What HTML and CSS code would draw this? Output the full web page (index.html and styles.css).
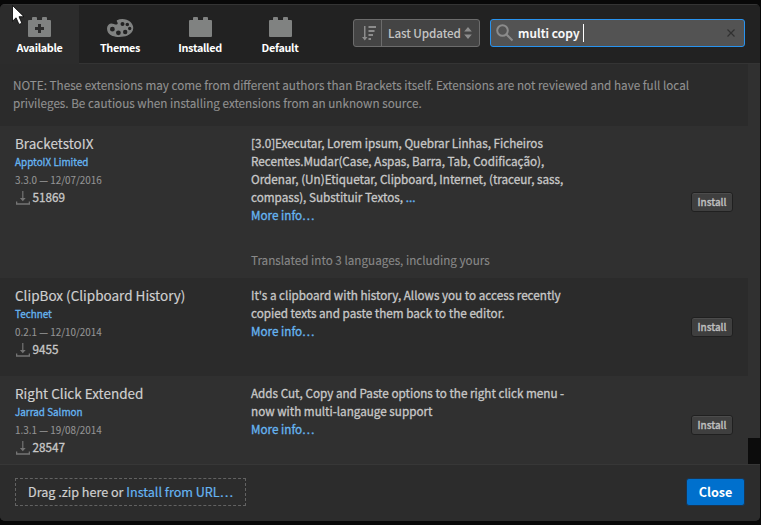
FILE: index.html
```
<!DOCTYPE html>
<html lang="en">
<head>
<meta charset="utf-8">
<title>Extension Manager</title>
<link rel="stylesheet" href="styles.css">
</head>
<body>
<svg class="defs" width="0" height="0">
  <symbol id="brick" viewBox="0 0 23 20"><path d="M4 3V1q0-1 1-1h3q1 0 1 1v2h5V1q0-1 1-1h3q1 0 1 1v2h3q1 0 1 1v15q0 1-1 1H1q-1 0-1-1V4q0-1 1-1z"/></symbol>
  <symbol id="download" viewBox="0 0 14 14"><path d="M6.200 0h1.200v7h2.300L6.800 10.200 3.900 7h2.300zM0 10.500h1.300v1.700h11.400v-1.700H14v3.300H0z"/></symbol>
</svg>
<div class="modal">
  <header class="header">
    <nav class="tabs">
      <a class="tab active"><svg class="brick" viewBox="0 0 23 20"><use href="#brick"/><path class="plus" d="M10 7h3v3h3v3h-3v3h-3v-3H7v-3h3z"/></svg><span>Available</span></a>
      <a class="tab"><svg class="palette" viewBox="0 0 27 18"><path fill-rule="evenodd" d="M10 1.200C14-.8 20-.2 23.500 3 28 7.500 27 14 20.500 16.500 14 19 4 18.500 1 13.500-1.200 9 .5 5 4 4.500c2.500-.2 5 2 6.500.5 1-1.200-1.500-2.500-.5-3.800zM13.500 5a2 2 0 1 0 4 0 2 2 0 1 0-4 0zM18.500 5.500a1.800 1.800 0 1 0 3.600 0 1.800 1.800 0 1 0-3.600 0zM21 9.500a1.700 1.700 0 1 0 3.400 0 1.700 1.700 0 1 0-3.400 0zM16 13a2.200 2.200 0 1 0 4.400 0 2.200 2.200 0 1 0-4.400 0zM9 13.800a2.400 2.400 0 1 0 4.800 0 2.400 2.400 0 1 0-4.800 0zM3 10.200a2.400 2.400 0 1 0 4.800 0 2.400 2.400 0 1 0-4.800 0z"/></svg><span>Themes</span></a>
      <a class="tab"><svg class="brick" viewBox="0 0 23 20"><use href="#brick"/></svg><span>Installed</span></a>
      <a class="tab"><svg class="brick" viewBox="0 0 23 20"><use href="#brick"/></svg><span>Default</span></a>
    </nav>
    <div class="sort">
      <span class="sort-dir"><svg width="15" height="15" viewBox="0 0 15 15"><path d="M2 0h1.500v11H5.500L2.800 14.500 0 11h2zM6.500 0h7.500v2H6.500zM6.500 4h6v2h-6zM6.500 8h4.500v2H6.500zM6.500 12h2.500v2H6.500z"/></svg></span>
      <span class="sort-label">Last Updated</span>
      <svg class="arrows" width="8" height="12" viewBox="0 0 8 12"><path d="M4 0l3.800 4.500H.2zM.2 7.500h7.600L4 12z"/></svg>
    </div>
    <div class="search">
      <svg width="18" height="18" viewBox="0 0 18 18"><circle cx="6.500" cy="6.500" r="5.300"/><path d="M10.500 10.500l6 6"/></svg>
      <span class="query">multi copy</span><i class="caret"></i>
      <svg class="clear" width="8" height="8" viewBox="0 0 8 8"><path d="M.5.5l7 7M7.500.5l-7 7"/></svg>
    </div>
  </header>
  <main class="body">
    <div class="list">
      <p class="note">NOTE: These extensions may come from different authors than Brackets itself. Extensions are not reviewed and have full local<br>privileges. Be cautious when installing extensions from an unknown source.</p>
      <section class="row tall">
        <div class="info"><h2>BracketstoIX</h2><a class="author">ApptoIX Limited</a><div class="version">3.3.0 — 12/07/2016</div><div class="downloads"><svg><use href="#download"/></svg><span>51869</span></div></div>
        <div class="desc">[3.0]Executar, Lorem ipsum, Quebrar Linhas, Ficheiros<br>Recentes.Mudar(Case, Aspas, Barra, Tab, Codificação),<br>Ordenar, (Un)Etiquetar, Clipboard, Internet, (traceur, sass,<br>compass), Substituir Textos, <a>...</a><br><a>More info…</a><p class="translated">Translated into 3 languages, including yours</p></div>
        <div class="action"><button>Install</button></div>
      </section>
      <section class="row dark">
        <div class="info"><h2>ClipBox (Clipboard History)</h2><a class="author">Technet</a><div class="version">0.2.1 — 12/10/2014</div><div class="downloads"><svg><use href="#download"/></svg><span>9455</span></div></div>
        <div class="desc">It's a clipboard with history, Allows you to access recently<br>copied texts and paste them back to the editor.<br><a>More info…</a></div>
        <div class="action"><button>Install</button></div>
      </section>
      <section class="row">
        <div class="info"><h2>Right Click Extended</h2><a class="author">Jarrad Salmon</a><div class="version">1.3.1 — 19/08/2014</div><div class="downloads"><svg><use href="#download"/></svg><span>28547</span></div></div>
        <div class="desc">Adds Cut, Copy and Paste options to the right click menu -<br>now with multi-langauge support<br><a>More info…</a></div>
        <div class="action"><button>Install</button></div>
      </section>
    </div>
    <div class="scrollbar"><div class="thumb"></div></div>
  </main>
  <footer class="footer">
    <div class="drop">Drag .zip here or <a>Install from URL…</a></div>
    <button class="close">Close</button>
  </footer>
</div>
<svg class="pointer" width="13" height="20" viewBox="0 0 13 20"><path d="M.5.5v15.700l3.600-3.400 2.900 6.600 2.900-1.200-2.900-6.500h5z"/></svg>
</body>
</html>
```

FILE: styles.css
```
* { box-sizing: border-box; }
body {
  margin: 0; padding-top: 4px; height: 525px; overflow: hidden;
  background: #080808; color: #c8c8c8;
  font: 400 11.7px/18px "Noto Sans CJK SC", "Noto Sans", sans-serif;
  white-space: nowrap;
}
a { color: #66b5f2; }
.defs { display: block; height: 0; }
.modal {
  width: 760px; height: 517px; display: flex; flex-direction: column;
  border-radius: 5px; overflow: hidden; background: #2c2c2c;
}
.header {
  height: 60px; display: flex; align-items: flex-start; background: #222;
  border-top: 1px solid #343434; border-bottom: 1px solid #343434; flex: none;
}
.tabs { display: flex; width: 353px; }
.tab {
  width: 80px; height: 59px; padding-top: 12px; color: #fff; font-weight: 700; font-size: 10.8px;
  letter-spacing: -.3px;
  display: flex; flex-direction: column; align-items: center;
}
.tab.active { background: #2c2c2c; width: 79px; margin-right: 1px; height: 60px; }
.tab svg { fill: #808281; flex: none; height: 20px; width: 23px; margin-bottom: 1px; }
.tab .palette { width: 27px; height: 18px; margin: 2px 0 1px; }
.tab .plus { fill: #2c2c2c; }
.sort {
  width: 127px; height: 28px; margin-top: 14px; display: flex; align-items: center;
  background: #444; border: 1px solid #6c6c6c; border-radius: 3px; color: #c4c4c4;
}
.sort svg { fill: #8c8c8c; display: block; }
.sort-dir { width: 28px; height: 26px; padding: 6px 0 0 8px; border-right: 1px solid #6c6c6c; }
.sort-label { margin-left: 6px; width: 73px; font-weight: 500; letter-spacing: -.1px; }
.sort .arrows { margin-left: 3px; }
.search {
  width: 255px; height: 28px; margin: 14px 0 0 10px; padding: 0 9px 0 5px;
  display: flex; align-items: center; background: #535353; color: #fff;
  border: 1px solid #2893ef; border-radius: 3px;
}
.search svg { fill: none; stroke: #8b8b8b; stroke-width: 2; }
.query { margin-left: 4px; width: 64px; font-size: 12px; font-weight: 500; letter-spacing: .1px; -webkit-text-stroke: .2px; }
.caret { width: 1px; height: 18px; background: #fff; margin-left: 1px; }
.search .clear { stroke: #303030; stroke-width: 1.2; margin-left: auto; }
.body { height: 400px; display: flex; overflow: hidden; background: #303030; flex: none; }
.list { width: 748px; }
.note { margin: 0; height: 62px; padding: 12px 13px; background: #2b2b2b; color: #929292; -webkit-text-stroke: .1px; }
.row { height: 98px; display: flex; padding: 8px 15px 0; background: #303030; -webkit-text-stroke: .3px; }
.row.tall { height: 152px; }
.row.dark { background: #2b2b2b; }
.info { width: 236px; }
h2 { margin: 0 0 1px; font-size: 13.5px; line-height: 18px; font-weight: 400; color: #d0d0d0; -webkit-text-stroke: .15px; }
.author { display: block; font-size: 9.9px; }
.version { font-size: 9.9px; color: #949494; -webkit-text-stroke: .1px; }
.downloads { display: flex; align-items: center; height: 18px; margin-top: -1px; }
.downloads svg { width: 14px; height: 14px; fill: #747474; margin: 1px 2.500px 0 1px; -webkit-text-stroke: 0; }
.desc { width: 440px; }
.translated { margin: 27px 0 0; color: #898989; -webkit-text-stroke: .1px; }
.action { padding-top: 31px; }
.tall .action { padding-top: 58px; }
button {
  display: block; font: 500 9.9px/17px "Noto Sans CJK SC", "Noto Sans", sans-serif; padding: 0;
  width: 42px; height: 20px; border: 1px solid #202020; border-radius: 3px;
  background: #3f3f3f; color: #bebebe; box-shadow: inset 0 1px #4c4c4c;
}
.scrollbar { width: 12px; padding-top: 374px; }
.thumb { height: 26px; background: #0c0c0c; }
.footer {
  height: 57px; padding: 13px 15px 0; border-top: 1px solid #373737; background: #2c2c2c;
  display: flex; justify-content: space-between;
}
.drop { width: 231px; height: 28px; padding: 0 12px; line-height: 26px; font-size: 12.6px; border: 1px dashed #626262; color: #d0d0d0; -webkit-text-stroke: .2px; }
.close {
  width: 59px; height: 28px; font-size: 12.6px; line-height: 26px; font-weight: 700;
  color: #fff; background: #0070cd; border-color: #1b3550; box-shadow: none;
}
.pointer { position: absolute; left: 12px; top: 5px; fill: #fff; stroke: #000; stroke-width: .8; }
```
